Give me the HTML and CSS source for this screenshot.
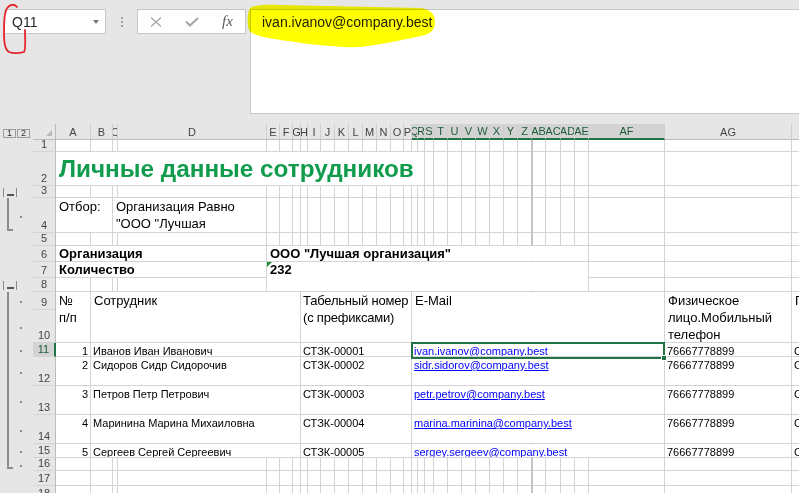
FILE: index.html
```html
<!DOCTYPE html>
<html lang="ru">
<head>
<meta charset="utf-8">
<title>Личные данные сотрудников</title>
<link rel="stylesheet" href="styles.css">
</head>
<body>
<div class="fbar">
  <div class="namebox"><span>Q11</span><span class="caret"></span></div>
  <div class="grip"><i></i><i></i><i></i></div>
  <div class="fbtns">
    <span class="fbtn"><svg width="12" height="10" viewBox="0 0 12 10"><path d="M1 0.5L11 9.5M11 0.5L1 9.5" stroke="#a6a6a6" stroke-width="1.3" fill="none"/></svg></span>
    <span class="fbtn"><svg width="14" height="10" viewBox="0 0 14 10"><path d="M1 4.5L5 8.5L13 1" stroke="#a6a6a6" stroke-width="2" fill="none"/></svg></span>
    <span class="fbtn fx">fx</span>
  </div>
  <div class="finput">ivan.ivanov@company.best</div>
</div>

<div class="sheet">
  <div class="levels"><span class="lvl">1</span><span class="lvl">2</span></div>
  <div class="corner"></div>
  <div class="colhdr">A</div>
  <div class="colhdr">B</div>
  <div class="colhdr">C</div>
  <div class="colhdr">D</div>
  <div class="colhdr">E</div>
  <div class="colhdr">F</div>
  <div class="colhdr">G</div>
  <div class="colhdr">H</div>
  <div class="colhdr">I</div>
  <div class="colhdr">J</div>
  <div class="colhdr">K</div>
  <div class="colhdr">L</div>
  <div class="colhdr">M</div>
  <div class="colhdr">N</div>
  <div class="colhdr">O</div>
  <div class="colhdr">P</div>
  <div class="colhdr sel">Q</div>
  <div class="colhdr sel">R</div>
  <div class="colhdr sel">S</div>
  <div class="colhdr sel">T</div>
  <div class="colhdr sel">U</div>
  <div class="colhdr sel">V</div>
  <div class="colhdr sel">W</div>
  <div class="colhdr sel">X</div>
  <div class="colhdr sel">Y</div>
  <div class="colhdr sel">Z</div>
  <div class="colhdr sel">AB</div>
  <div class="colhdr sel">AC</div>
  <div class="colhdr sel">AD</div>
  <div class="colhdr sel">AE</div>
  <div class="colhdr sel">AF</div>
  <div class="colhdr">AG</div>
  <div class="colhdr">AH</div>

  <div class="rowhdr r1">1</div>
  <div class="rowhdr r2">2</div>
  <div class="rowhdr r3">3</div>
  <div class="rowhdr r4">4</div>
  <div class="rowhdr r5">5</div>
  <div class="rowhdr r6">6</div>
  <div class="rowhdr r7">7</div>
  <div class="rowhdr r8">8</div>
  <div class="rowhdr r9">9</div>
  <div class="rowhdr r10">10</div>
  <div class="rowhdr r11 sel">11</div>
  <div class="rowhdr r12">12</div>
  <div class="rowhdr r13">13</div>
  <div class="rowhdr r14">14</div>
  <div class="rowhdr r15">15</div>
  <div class="rowhdr r16">16</div>
  <div class="rowhdr r17">17</div>
  <div class="rowhdr r18">18</div>

  <span class="ol-btn r3"></span>
  <span class="ol-line r4"></span>
  <i class="ol-dot r4"></i>
  <span class="ol-btn r8"></span>
  <span class="ol-line r9-16"></span>
  <i class="ol-dot r9"></i>
  <i class="ol-dot r10"></i>
  <i class="ol-dot r11"></i>
  <i class="ol-dot r12"></i>
  <i class="ol-dot r13"></i>
  <i class="ol-dot r14"></i>
  <i class="ol-dot r15"></i>
  <i class="ol-dot r16"></i>

  <div class="cell title r2 c-ar">Личные данные сотрудников</div>

  <div class="cell t13 r4 c-ab">Отбор:</div>
  <div class="cell t13 wrap r4 c-cd">Организация Равно<br>"ООО "Лучшая<br>организация"</div>

  <div class="cell t13 b r6 c-ad">Организация</div>
  <div class="cell t13 b r6 c-eae">ООО "Лучшая организация"</div>
  <div class="cell t13 b r7 c-ad">Количество</div>
  <div class="cell t13 b err r7-8 c-eae">232</div>

  <div class="cell t13 r9-10 c-a">№<br>п/п</div>
  <div class="cell t13 r9-10 c-bg">Сотрудник</div>
  <div class="cell t13 tight r9-10 c-hp">Табельный номер<br>(с префиксами)</div>
  <div class="cell t13 r9-10 c-qaf">E-Mail</div>
  <div class="cell t13 wrap r9-10 c-ag">Физическое лицо.Мобильный телефон</div>
  <div class="cell t13 r9-10 c-ah">Подразделение</div>

  <div class="cell data num r11 c-a">1</div>
  <div class="cell data r11 c-bg">Иванов Иван Иванович</div>
  <div class="cell data r11 c-hp">СТЗК-00001</div>
  <div class="cell data r11 c-qaf"><a class="link" href="#">ivan.ivanov@company.best</a></div>
  <div class="cell data r11 c-ag">76667778899</div>
  <div class="cell data r11 c-ah">Склад</div>

  <div class="cell data num r12 c-a">2</div>
  <div class="cell data r12 c-bg">Сидоров Сидр Сидорочив</div>
  <div class="cell data r12 c-hp">СТЗК-00002</div>
  <div class="cell data r12 c-qaf"><a class="link" href="#">sidr.sidorov@company.best</a></div>
  <div class="cell data r12 c-ag">76667778899</div>
  <div class="cell data r12 c-ah">Склад</div>

  <div class="cell data num r13 c-a">3</div>
  <div class="cell data r13 c-bg">Петров Петр Петрович</div>
  <div class="cell data r13 c-hp">СТЗК-00003</div>
  <div class="cell data r13 c-qaf"><a class="link" href="#">petr.petrov@company.best</a></div>
  <div class="cell data r13 c-ag">76667778899</div>
  <div class="cell data r13 c-ah">Склад</div>

  <div class="cell data num r14 c-a">4</div>
  <div class="cell data r14 c-bg">Маринина Марина Михаиловна</div>
  <div class="cell data r14 c-hp">СТЗК-00004</div>
  <div class="cell data r14 c-qaf"><a class="link" href="#">marina.marinina@company.best</a></div>
  <div class="cell data r14 c-ag">76667778899</div>
  <div class="cell data r14 c-ah">Склад</div>

  <div class="cell data num r15 c-a">5</div>
  <div class="cell data r15 c-bg">Сергеев Сергей Сергеевич</div>
  <div class="cell data r15 c-hp">СТЗК-00005</div>
  <div class="cell data r15 c-qaf"><a class="link" href="#">sergey.sergeev@company.best</a></div>
  <div class="cell data r15 c-ag">76667778899</div>
  <div class="cell data r15 c-ah">Склад</div>

  <div class="selbox"><span class="handle"></span></div>
</div>

<svg class="hl" viewBox="0 0 799 60" width="799" height="60"><path d="M250 8 C255 5 265 4 280 5 L420 8 C430 9 435 14 435 22 C435 30 431 34 421 36 C406 39 386 44 360 47 C335 48 300 43 275 39 C262 37 252 35 249 30 C247 24 247 13 250 8 Z" fill="#ffff00"/></svg>
<svg class="mark" viewBox="0 0 40 60" width="40" height="60"><path d="M17 7 C15 4 11 4 8 7 C4 12 4 22 4 34 C4 44 5 50 9 52 C14 54 20 53 24 52 C26 50 25 40 25 30" fill="none" stroke="#e5262a" stroke-width="1.8" stroke-linecap="round"/></svg>
</body>
</html>
```

FILE: styles.css
```css
* { box-sizing: border-box; }
html, body { margin: 0; padding: 0; }
body {
  width: 799px;
  height: 493px;
  overflow: hidden;
  position: relative;
  background: #e6e6e6;
  font-family: "Liberation Sans", Arial, sans-serif;
  color: #000;
}

/* ---------- formula bar ---------- */
.fbar {
  height: 124px;
  display: flex;
  align-items: flex-start;
  padding: 9px 0 0 4px;
}
.namebox {
  flex: none;
  width: 102px;
  height: 25px;
  background: #fff;
  border: 1px solid #c6c6c6;
  display: flex;
  align-items: center;
  justify-content: space-between;
  padding: 1px 6px 0 7px;
  font-size: 14px;
  line-height: 16px;
  color: #262626;
}
.caret {
  width: 0;
  height: 0;
  border-left: 3px solid transparent;
  border-right: 3px solid transparent;
  border-top: 4px solid #777;
}
.grip {
  flex: none;
  width: 2px;
  margin: 8px 14px 0 15px;
  display: flex;
  flex-direction: column;
  gap: 2px;
}
.grip i { display: block; width: 2px; height: 2px; background: #a3a3a3; }
.fbtns {
  flex: none;
  width: 109px;
  height: 25px;
  background: #fff;
  border: 1px solid #c6c6c6;
  display: flex;
}
.fbtn {
  width: 36px;
  display: flex;
  align-items: center;
  justify-content: center;
}
.fbtn.fx {
  width: 35px;
  font: italic 15px "Liberation Serif", serif;
  color: #5a5a5a;
}
.finput {
  flex: 1;
  margin-left: 4px;
  height: 105px;
  background: #fff;
  border: 1px solid #c6c6c6;
  border-right: 0;
  padding: 4px 0 0 11px;
  font-size: 14px;
  line-height: 16px;
  color: #222;
}

/* ---------- sheet grid ---------- */
.sheet {
  display: grid;
  grid-template-columns:
    33px 23px 35px 22px 5px 149px 13px 13px 8px 7px
    13px 14px 14px 14px 14px 14px 13px 8px 6px 7px 9px
    14px 14px 14px 14px 14px 14px 14px
    14px 15px 14px 14px 76px 127px 50px;
  grid-template-rows:
    16px 12px 34px 12px 35px 13px 16px 16px 14px 18px
    33px 14px 29px 29px 29px 14px 13px 15px 15px;
  background:
    linear-gradient(#d4d4d4 0 0) 90px 16px / 1px 100% no-repeat,
    linear-gradient(#d4d4d4 0 0) 112px 16px / 1px 100% no-repeat,
    linear-gradient(#d4d4d4 0 0) 117px 16px / 1px 100% no-repeat,
    linear-gradient(#d4d4d4 0 0) 266px 16px / 1px 100% no-repeat,
    linear-gradient(#d4d4d4 0 0) 279px 16px / 1px 100% no-repeat,
    linear-gradient(#d4d4d4 0 0) 292px 16px / 1px 100% no-repeat,
    linear-gradient(#d4d4d4 0 0) 300px 16px / 1px 100% no-repeat,
    linear-gradient(#d4d4d4 0 0) 307px 16px / 1px 100% no-repeat,
    linear-gradient(#d4d4d4 0 0) 320px 16px / 1px 100% no-repeat,
    linear-gradient(#d4d4d4 0 0) 334px 16px / 1px 100% no-repeat,
    linear-gradient(#d4d4d4 0 0) 348px 16px / 1px 100% no-repeat,
    linear-gradient(#d4d4d4 0 0) 362px 16px / 1px 100% no-repeat,
    linear-gradient(#d4d4d4 0 0) 376px 16px / 1px 100% no-repeat,
    linear-gradient(#d4d4d4 0 0) 390px 16px / 1px 100% no-repeat,
    linear-gradient(#d4d4d4 0 0) 403px 16px / 1px 100% no-repeat,
    linear-gradient(#d4d4d4 0 0) 411px 16px / 1px 100% no-repeat,
    linear-gradient(#d4d4d4 0 0) 417px 16px / 1px 100% no-repeat,
    linear-gradient(#d4d4d4 0 0) 424px 16px / 1px 100% no-repeat,
    linear-gradient(#d4d4d4 0 0) 433px 16px / 1px 100% no-repeat,
    linear-gradient(#d4d4d4 0 0) 447px 16px / 1px 100% no-repeat,
    linear-gradient(#d4d4d4 0 0) 461px 16px / 1px 100% no-repeat,
    linear-gradient(#d4d4d4 0 0) 475px 16px / 1px 100% no-repeat,
    linear-gradient(#d4d4d4 0 0) 489px 16px / 1px 100% no-repeat,
    linear-gradient(#d4d4d4 0 0) 503px 16px / 1px 100% no-repeat,
    linear-gradient(#d4d4d4 0 0) 517px 16px / 1px 100% no-repeat,
    linear-gradient(#c4c4c4 0 0) 531px 16px / 2px 100% no-repeat,
    linear-gradient(#d4d4d4 0 0) 545px 16px / 1px 100% no-repeat,
    linear-gradient(#d4d4d4 0 0) 560px 16px / 1px 100% no-repeat,
    linear-gradient(#d4d4d4 0 0) 574px 16px / 1px 100% no-repeat,
    linear-gradient(#d4d4d4 0 0) 588px 16px / 1px 100% no-repeat,
    linear-gradient(#d4d4d4 0 0) 664px 16px / 1px 100% no-repeat,
    linear-gradient(#d4d4d4 0 0) 791px 16px / 1px 100% no-repeat,
    linear-gradient(#d4d4d4 0 0) 56px 27px / 100% 1px no-repeat,
    linear-gradient(#d4d4d4 0 0) 56px 61px / 100% 1px no-repeat,
    linear-gradient(#d4d4d4 0 0) 56px 73px / 100% 1px no-repeat,
    linear-gradient(#d4d4d4 0 0) 56px 108px / 100% 1px no-repeat,
    linear-gradient(#d4d4d4 0 0) 56px 121px / 100% 1px no-repeat,
    linear-gradient(#d4d4d4 0 0) 56px 137px / 100% 1px no-repeat,
    linear-gradient(#d4d4d4 0 0) 56px 153px / 100% 1px no-repeat,
    linear-gradient(#d4d4d4 0 0) 56px 167px / 100% 1px no-repeat,
    linear-gradient(#d4d4d4 0 0) 56px 185px / 100% 1px no-repeat,
    linear-gradient(#d4d4d4 0 0) 56px 218px / 100% 1px no-repeat,
    linear-gradient(#d4d4d4 0 0) 56px 232px / 100% 1px no-repeat,
    linear-gradient(#d4d4d4 0 0) 56px 261px / 100% 1px no-repeat,
    linear-gradient(#d4d4d4 0 0) 56px 290px / 100% 1px no-repeat,
    linear-gradient(#d4d4d4 0 0) 56px 319px / 100% 1px no-repeat,
    linear-gradient(#d4d4d4 0 0) 56px 333px / 100% 1px no-repeat,
    linear-gradient(#d4d4d4 0 0) 56px 346px / 100% 1px no-repeat,
    linear-gradient(#d4d4d4 0 0) 56px 361px / 100% 1px no-repeat,
    linear-gradient(#d4d4d4 0 0) 56px 376px / 100% 1px no-repeat,
    linear-gradient(#fff 0 0) 56px 16px / 100% 100% no-repeat #e6e6e6;
}

/* row placement */
.r1 { grid-row: 2; }
.r2 { grid-row: 3; }
.r3 { grid-row: 4; }
.r4 { grid-row: 5; }
.r5 { grid-row: 6; }
.r6 { grid-row: 7; }
.r7 { grid-row: 8; }
.r8 { grid-row: 9; }
.r9 { grid-row: 10; }
.r10 { grid-row: 11; }
.r11 { grid-row: 12; }
.r12 { grid-row: 13; }
.r13 { grid-row: 14; }
.r14 { grid-row: 15; }
.r15 { grid-row: 16; }
.r16 { grid-row: 17; }
.r17 { grid-row: 18; }
.r18 { grid-row: 19; }
.r7-8 { grid-row: 8 / 10; }
.r9-10 { grid-row: 10 / 12; }
.r9-16 { grid-row: 10 / 18; }

/* column placement */
.c-a { grid-column: 3; }
.c-ab { grid-column: 3 / 5; }
.c-ad { grid-column: 3 / 7; }
.c-ar { grid-column: 3 / 21; }
.c-cd { grid-column: 5 / 7; }
.c-bg { grid-column: 4 / 10; }
.c-hp { grid-column: 10 / 19; }
.c-qaf { grid-column: 19 / 34; }
.c-eae { grid-column: 7 / 33; }
.c-ag { grid-column: 34; }
.c-ah { grid-column: 35; }

/* headers */
.levels {
  grid-column: 1;
  grid-row: 1;
  display: flex;
  align-items: flex-end;
  gap: 1px;
  padding: 0 0 2px 3px;
}
.lvl {
  width: 13px;
  height: 9px;
  border: 1px solid #9c9c9c;
  font-size: 9px;
  line-height: 7px;
  text-align: center;
  color: #333;
}
.corner {
  grid-column: 2;
  grid-row: 1;
  background: #e6e6e6;
  border-right: 1px solid #bcbcbc;
  border-bottom: 1px solid #bcbcbc;
  display: flex;
  justify-content: flex-end;
  align-items: flex-end;
  padding: 0 3px 3px 0;
}
.corner::after {
  content: "";
  border-left: 6px solid transparent;
  border-bottom: 6px solid #b9b9b9;
}
.colhdr {
  grid-row: 1;
  display: flex;
  justify-content: center;
  align-items: center;
  overflow: hidden;
  white-space: nowrap;
  font-size: 11px;
  line-height: 14px;
  color: #444;
  background: #e6e6e6;
  border-right: 1px solid #cfcfcf;
  border-bottom: 1px solid #bcbcbc;
}
.colhdr.sel {
  background: #d3d3d3;
  color: #1d5c39;
  border-bottom: 2px solid #217346;
}
.rowhdr {
  grid-column: 2;
  display: flex;
  justify-content: center;
  align-items: flex-end;
  overflow: hidden;
  font-size: 11px;
  line-height: 14px;
  color: #444;
  background: #e6e6e6;
  border-right: 1px solid #bcbcbc;
  border-bottom: 1px solid #d4d4d4;
}
.rowhdr.sel {
  background: #d3d3d3;
  color: #1d5c39;
  border-right: 2px solid #217346;
}

/* outline (grouping) gutter */
.ol-btn {
  grid-column: 1;
  justify-self: start;
  align-self: center;
  margin-left: 3px;
  width: 14px;
  height: 9px;
  border-left: 1px solid #8a8a8a;
  border-right: 1px solid #8a8a8a;
  display: flex;
  justify-content: center;
  align-items: flex-end;
  padding-bottom: 1px;
}
.ol-btn::before {
  content: "";
  width: 7px;
  height: 2px;
  background: #555;
}
.ol-line {
  grid-column: 1;
  justify-self: start;
  margin: 0 0 2px 7px;
  width: 6px;
  border-left: 2px solid #8c8c8c;
  border-bottom: 2px solid #8c8c8c;
}
.ol-dot {
  grid-column: 1;
  justify-self: start;
  align-self: center;
  margin: 2px 0 0 20px;
  width: 2px;
  height: 2px;
  background: #8c8c8c;
}

/* cells */
.cell {
  background: #fff;
  margin: 0 1px 1px 0;
  overflow: hidden;
  white-space: nowrap;
  padding: 0 2px;
  font-size: 11px;
  line-height: 14px;
  color: #000;
}
.t13 { font-size: 13px; line-height: 17px; padding-left: 3px; }
.t13.tight { padding: 0 0 0 2px; letter-spacing: -0.2px; }
.b { font-weight: bold; line-height: 16px; }
.wrap { white-space: normal; }
.data { padding-top: 1px; }
.num { text-align: right; }
.title {
  font-size: 24.3px;
  font-weight: bold;
  line-height: 28px;
  color: #109b4d;
  display: flex;
  align-items: flex-end;
  padding: 0 0 2px 3px;
}
.link { color: #0000ff; text-decoration: underline; }
.err { position: relative; }
.err::before {
  content: "";
  position: absolute;
  left: 0;
  top: 0;
  border-top: 5px solid #1f8a3a;
  border-right: 5px solid transparent;
}

/* active cell selection */
.selbox {
  grid-column: 19 / 34;
  grid-row: 12;
  margin: -1px 0 -2px -1px;
  border: 2px solid #217346;
  position: relative;
  z-index: 2;
  pointer-events: none;
}
.handle {
  position: absolute;
  right: -4px;
  bottom: -4px;
  width: 6px;
  height: 6px;
  background: #217346;
  border: 1px solid #fff;
}

/* annotations drawn over the screenshot */
.hl {
  position: absolute;
  left: 0;
  top: 0;
  mix-blend-mode: multiply;
  pointer-events: none;
}
.mark {
  position: absolute;
  left: 0;
  top: 0;
  pointer-events: none;
}
```
